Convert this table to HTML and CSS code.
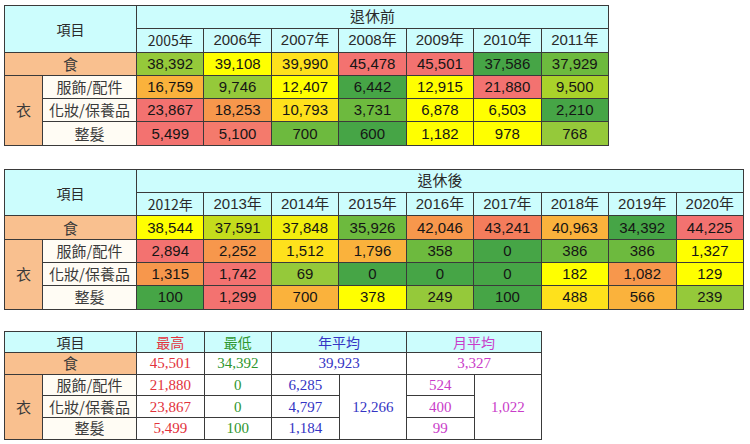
FILE: index.html
```html
<!DOCTYPE html>
<html lang="zh-Hant">
<head>
<meta charset="utf-8">
<title>退休前後支出</title>
<link rel="stylesheet" href="styles.css">
</head>
<body>
<main class="page">
  <table class="t t1">
    <colgroup><col class="c1"><col class="c2"><col span="7"></colgroup>
    <tr><th colspan="2" rowspan="2" class="hd">項目</th><th colspan="7" class="hd">退休前</th></tr>
    <tr><th class="hd">2005年</th><th class="hd">2006年</th><th class="hd">2007年</th><th class="hd">2008年</th><th class="hd">2009年</th><th class="hd">2010年</th><th class="hd">2011年</th></tr>
    <tr><th colspan="2" class="lb">食</th><td class="g3">38,392</td><td class="y">39,108</td><td class="y2">39,990</td><td class="r">45,478</td><td class="r">45,501</td><td class="g1">37,586</td><td class="g2">37,929</td></tr>
    <tr><th rowspan="3" class="lb">衣</th><th class="sl">服飾/配件</th><td class="o1">16,759</td><td class="g3">9,746</td><td class="y">12,407</td><td class="g1">6,442</td><td class="y">12,915</td><td class="r">21,880</td><td class="g4">9,500</td></tr>
    <tr><th class="sl">化妝/保養品</th><td class="r">23,867</td><td class="o2">18,253</td><td class="y2">10,793</td><td class="g2">3,731</td><td class="y">6,878</td><td class="y">6,503</td><td class="g1">2,210</td></tr>
    <tr><th class="sl">整髮</th><td class="r">5,499</td><td class="r2">5,100</td><td class="g2">700</td><td class="g1">600</td><td class="y">1,182</td><td class="y">978</td><td class="g3">768</td></tr>
  </table>

  <table class="t t2">
    <colgroup><col class="c1"><col class="c2"><col span="9"></colgroup>
    <tr><th colspan="2" rowspan="2" class="hd">項目</th><th colspan="9" class="hd">退休後</th></tr>
    <tr><th class="hd">2012年</th><th class="hd">2013年</th><th class="hd">2014年</th><th class="hd">2015年</th><th class="hd">2016年</th><th class="hd">2017年</th><th class="hd">2018年</th><th class="hd">2019年</th><th class="hd">2020年</th></tr>
    <tr><th colspan="2" class="lb">食</th><td class="y">38,544</td><td class="g5">37,591</td><td class="y3">37,848</td><td class="g2">35,926</td><td class="o2">42,046</td><td class="o3">43,241</td><td class="o1">40,963</td><td class="g1">34,392</td><td class="r">44,225</td></tr>
    <tr><th rowspan="3" class="lb">衣</th><th class="sl">服飾/配件</th><td class="r">2,894</td><td class="o2">2,252</td><td class="y2">1,512</td><td class="o1">1,796</td><td class="g2">358</td><td class="g1">0</td><td class="g2">386</td><td class="g2">386</td><td class="y">1,327</td></tr>
    <tr><th class="sl">化妝/保養品</th><td class="o2">1,315</td><td class="r">1,742</td><td class="g3">69</td><td class="g1">0</td><td class="g1">0</td><td class="g1">0</td><td class="y">182</td><td class="o2">1,082</td><td class="y">129</td></tr>
    <tr><th class="sl">整髮</th><td class="g1">100</td><td class="r">1,299</td><td class="o1">700</td><td class="y">378</td><td class="g3">249</td><td class="g1">100</td><td class="y2">488</td><td class="o1">566</td><td class="g3">239</td></tr>
  </table>

  <table class="t t3">
    <colgroup><col class="c1"><col class="c2"><col span="6"></colgroup>
    <tr><th colspan="2" class="hd">項目</th><th class="hd red">最高</th><th class="hd grn">最低</th><th colspan="2" class="hd blu">年平均</th><th colspan="2" class="hd mag">月平均</th></tr>
    <tr><th colspan="2" class="lb">食</th><td class="v red">45,501</td><td class="v grn">34,392</td><td colspan="2" class="v blu">39,923</td><td colspan="2" class="v mag">3,327</td></tr>
    <tr><th rowspan="3" class="lb">衣</th><th class="sl">服飾/配件</th><td class="v red">21,880</td><td class="v grn">0</td><td class="v blu">6,285</td><td rowspan="3" class="v blu">12,266</td><td class="v mag">524</td><td rowspan="3" class="v mag">1,022</td></tr>
    <tr><th class="sl">化妝/保養品</th><td class="v red">23,867</td><td class="v grn">0</td><td class="v blu">4,797</td><td class="v mag">400</td></tr>
    <tr><th class="sl">整髮</th><td class="v red">5,499</td><td class="v grn">100</td><td class="v blu">1,184</td><td class="v mag">99</td></tr>
  </table>
</main>
</body>
</html>
```

FILE: styles.css
```css
html, body {
  margin: 0;
  padding: 0;
  background: #ffffff;
}

.page {
  display: flex;
  flex-direction: column;
  align-items: flex-start;
  padding: 5px 0 0 4px;
  font-family: "Liberation Sans", "Noto Sans CJK TC", sans-serif;
  color: #151515;
}

.t {
  border-collapse: collapse;
  table-layout: fixed;
  border: 1px solid #555;
}

.t1 { width: 605px; }
.t2 { width: 740px; margin-top: 23px; }
.t3 { width: 538px; margin-top: 21px; }

.c1 { width: 38px; }
.c2 { width: 94px; }

.t th,
.t td {
  border: 1px solid #3a3a3a;
  padding: 0;
  text-align: center;
  vertical-align: middle;
  font-size: 15px;
  font-weight: normal;
  line-height: 18px;
  white-space: nowrap;
  overflow: hidden;
}

.t1 th, .t1 td,
.t2 th, .t2 td { height: 22.3px; }

.t3 th, .t3 td { height: 20.6px; }

.hd {
  background: #ccfdfd;
  color: #2a2a2a;
}

.lb {
  background: #f9c08f;
  color: #3a3a3a;
  font-family: "Noto Sans CJK TC", sans-serif;
  font-size: 14px;
}

.sl {
  background: #fffcf4;
  color: #3a3a3a;
  font-family: "Noto Sans CJK TC", sans-serif;
  font-size: 14px;
}

.t .hd:first-child { font-family: "Noto Sans CJK TC", sans-serif; font-size: 14px; }

/* heat-map shades */
.g1 { background: #46a546; }
.g2 { background: #6dba3e; }
.g3 { background: #95c93a; }
.g4 { background: #a9d22a; }
.g5 { background: #c4dc1c; }
.y  { background: #ffff00; }
.y3 { background: #f2ee0e; }
.y2 { background: #fee11c; }
.o1 { background: #fab23c; }
.o2 { background: #f7974c; }
.o3 { background: #f47c5c; }
.r  { background: #f37270; }
.r2 { background: #f47a6c; }

/* summary table */
.t3 .v {
  background: #ffffff;
  font-family: "Liberation Serif", "Noto Sans CJK TC", serif;
  font-size: 15px;
}

.t3 .hd.red, .t3 .hd.grn, .t3 .hd.blu, .t3 .hd.mag {
  font-family: "Noto Sans CJK TC", sans-serif;
  font-size: 14px;
}

.red { color: #e2323c; }
.grn { color: #2e962e; }
.blu { color: #3434c4; }
.mag { color: #c93cc9; }
```
